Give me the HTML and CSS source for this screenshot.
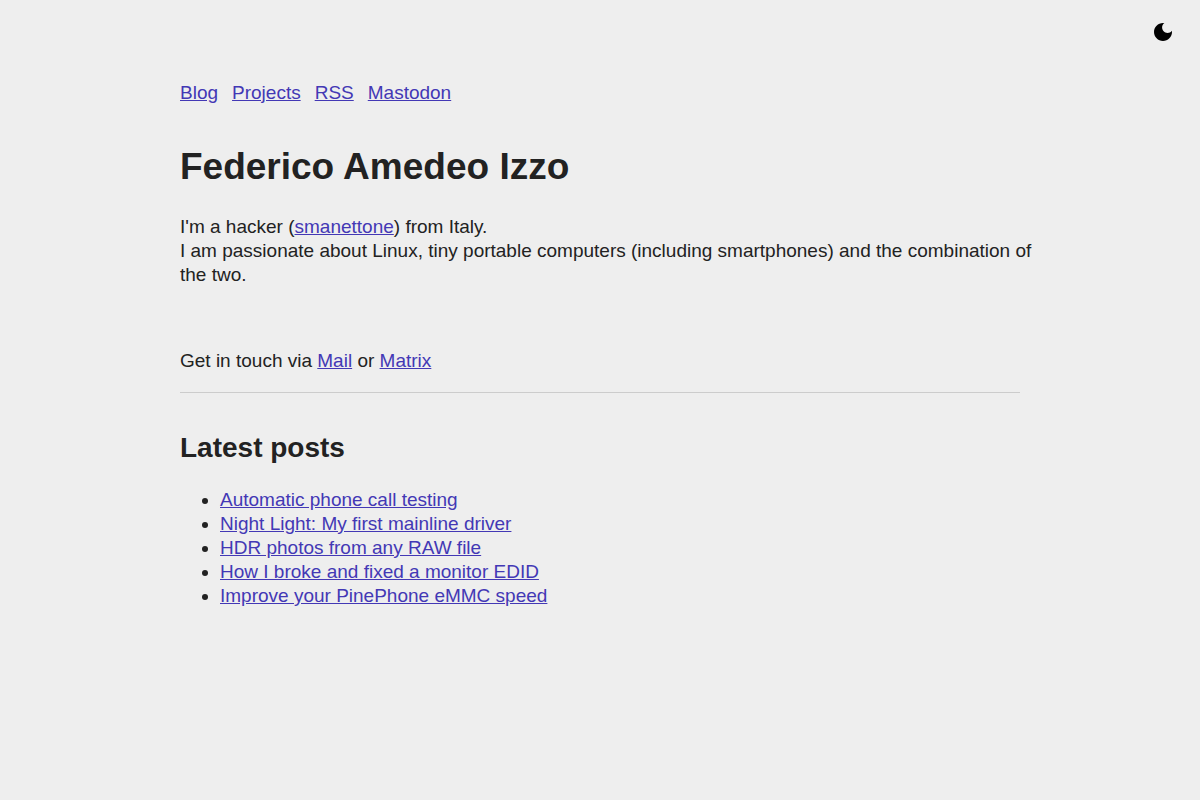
FILE: index.html
```html
<!DOCTYPE html>
<html lang="en">
<head>
    <meta charset="UTF-8">
    <meta name="viewport" content="width=device-width, initial-scale=1.0">
    <title>Federico Amedeo Izzo</title>
    <link rel="stylesheet" href="styles.css">
</head>
<body>
    <button class="theme-toggle" type="button" aria-label="Toggle dark mode">
        <svg viewBox="0 0 24 24" width="24" height="24" aria-hidden="true">
            <path d="M12 3c-4.97 0-9 4.03-9 9s4.03 9 9 9 9-4.03 9-9c0-.46-.04-.92-.1-1.36-.98 1.37-2.58 2.26-4.4 2.26-2.98 0-5.4-2.42-5.4-5.4 0-1.81.89-3.42 2.26-4.4C12.92 3.04 12.46 3 12 3z"/>
        </svg>
    </button>

    <div class="page">
        <nav class="menu">
            <a href="#blog">Blog</a>
            <a href="#projects">Projects</a>
            <a href="#rss">RSS</a>
            <a href="#mastodon">Mastodon</a>
        </nav>

        <main>
            <h1>Federico Amedeo Izzo</h1>
            <p class="intro">
                I'm a hacker (<a href="#smanettone">smanettone</a>) from Italy.<br>
                I am passionate about Linux, tiny portable computers (including smartphones) and the combination of the two.
            </p>
            <p class="contact">Get in touch via <a href="#mail">Mail</a> or <a href="#matrix">Matrix</a></p>
            <hr>

            <h2>Latest posts</h2>
            <ul class="posts">
                <li><a href="#phone-call-testing">Automatic phone call testing</a></li>
                <li><a href="#night-light">Night Light: My first mainline driver</a></li>
                <li><a href="#hdr-photos">HDR photos from any RAW file</a></li>
                <li><a href="#monitor-edid">How I broke and fixed a monitor EDID</a></li>
                <li><a href="#emmc-speed">Improve your PinePhone eMMC speed</a></li>
            </ul>
        </main>
    </div>
</body>
</html>
```
FILE: styles.css
```css
* {
    box-sizing: border-box;
}

body {
    margin: 0;
    background: #eee;
    color: #222;
    font-family: "Liberation Sans", Arial, sans-serif;
    font-size: 19px;
    line-height: 24px;
}

a {
    color: #4338b5;
}

.page {
    max-width: 880px;
    margin: 0 auto;
    padding: 81px 20px;
}

.menu {
    display: flex;
    flex-wrap: wrap;
    gap: 14px;
}

h1 {
    margin: 38px 0 24px;
    font-size: 37px;
    line-height: 48px;
}

h2 {
    margin: 37px 0 22px;
    font-size: 28px;
    line-height: 36px;
}

p {
    margin: 0;
}

/* the intro may run a little into the side padding */
.intro {
    margin-right: -16px;
}

.contact {
    margin-top: 62px;
}

hr {
    margin: 19px 0 0;
    border: 0;
    border-top: 1px solid #ccc;
}

.posts {
    margin: 0;
    padding-left: 40px;
}

.theme-toggle {
    position: absolute;
    top: 20px;
    right: 25px;
    width: 24px;
    height: 24px;
    padding: 0;
    border: 0;
    background: none;
    cursor: pointer;
}

.theme-toggle svg {
    display: block;
}
```
